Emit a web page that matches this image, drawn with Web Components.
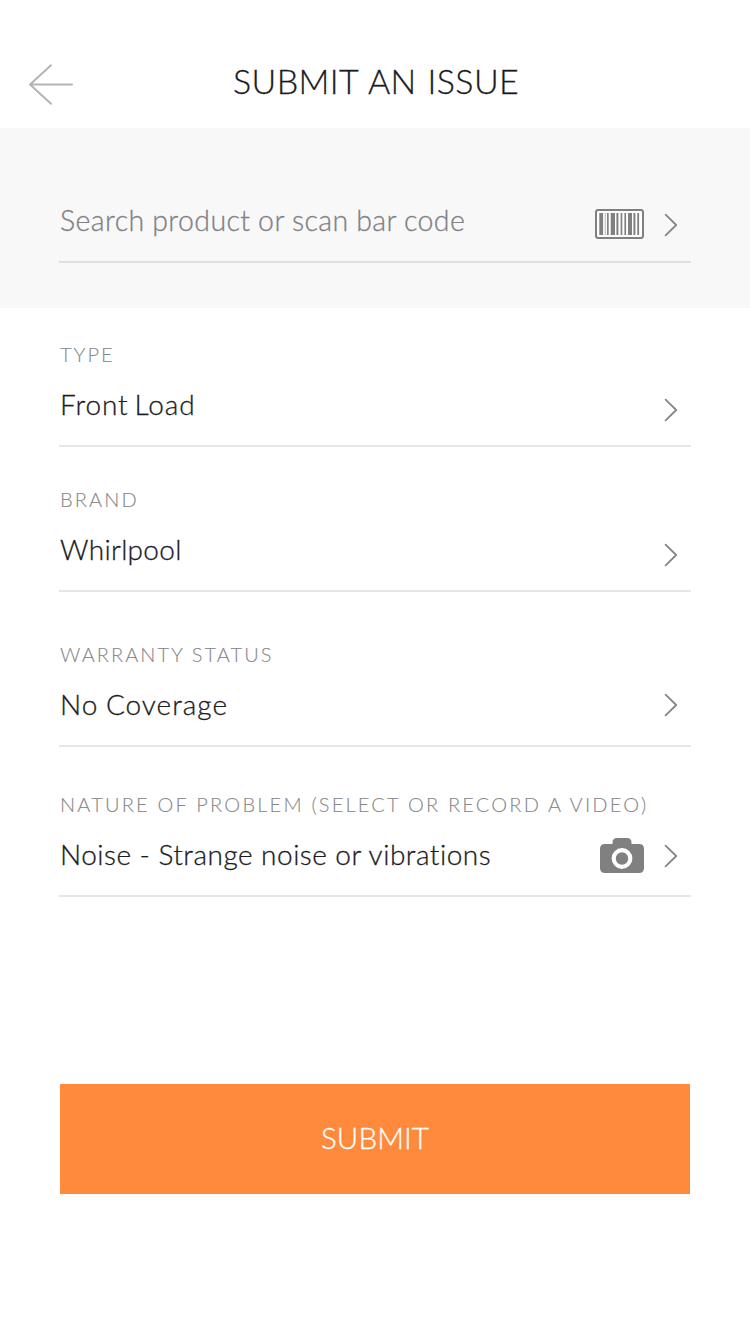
<!DOCTYPE html>
<html lang="en"><head><meta charset="utf-8"><title>Submit an issue</title>
<style>
body{margin:0;background:#fff;font-family:Lato,"Open Sans",sans-serif;font-weight:300}
</style></head><body>
<issue-screen></issue-screen>
<script>
const define = (name, html, setup) => customElements.define(name, class extends HTMLElement {
  connectedCallback(){
    if(this.shadowRoot) return;
    this.attachShadow({mode:'open'}).innerHTML = html;
    if(setup) setup(this);
  }
});
define('spaced-text', `<style>:host{display:block;white-space:nowrap;line-height:1;-webkit-text-stroke:.3px currentColor}:host([slot=label]){-webkit-text-stroke-width:.12px}</style><slot></slot>`, h=>{
  h.style.fontSize=h.getAttribute('size')+'px';
  h.style.letterSpacing=h.getAttribute('spacing')+'px';
  h.style.wordSpacing=(h.getAttribute('words')||0)+'px';
});
define('chevron-icon', `<style>:host{display:block;width:14px;height:24px}svg{display:block}</style>
<svg width="14" height="24" viewBox="0 0 14 24" fill="none" stroke="#85858a" stroke-width="1.8" stroke-linecap="round" stroke-linejoin="round"><path d="M1.6 1.7 12.2 12 1.6 22.3"/></svg>`);
define('back-icon', `<style>:host{display:block;width:46px;height:42px}svg{display:block}</style>
<svg width="46" height="42" viewBox="0 0 46 42" fill="none" stroke="#b4b4b4" stroke-width="2" stroke-linecap="round" stroke-linejoin="round"><path d="M23 1.3 2 20.5 23 39.8M2 20.5H44"/></svg>`);
define('barcode-icon', `<style>:host{display:block;width:49px;height:30px}svg{display:block}</style>
<svg width="49" height="30" viewBox="0 0 49 30"><rect x="1" y="1" width="47" height="28" rx="2.2" fill="#fff" stroke="#808080" stroke-width="2"/><g fill="#808080"><path d="M4.3 4h3.8v22H4.3zM12 4h1.7v22H12zM15.7 4h4.3v22h-4.3zM21.4 4h2v22h-2zM25.6 4h1.7v22h-1.7zM29.4 4h1.7v22h-1.7zM33 4h4v22h-4zM38.4 4h2v22h-2zM42.3 4h1.8v22h-1.8z"/><path d="M9.7 4h1v22h-1z" opacity=".6"/></g></svg>`);
define('camera-icon', `<style>:host{display:block;width:44px;height:35px;margin-bottom:1px}svg{display:block}</style>
<svg width="44" height="35" viewBox="0 0 44 35"><path fill="#808080" d="M5 6h7.5V4.5Q12.5 0 17 0h10q4.500 0 4.500 4.500V6H39q5 0 5 5v19q0 5-5 5H5q-5 0-5-5V11q0-5 5-5z"/><circle cx="22" cy="20.5" r="8.300" fill="#808080" stroke="#fff" stroke-width="4.200"/></svg>`);
define('screen-header', `<style>:host{display:grid;grid-template-columns:28px 46px 1fr;height:128px;box-sizing:border-box;color:#1b1b23}back-icon{grid-column:2;margin-top:64px}.t{margin:64px 0 0 159px}</style>
<back-icon></back-icon><div class="t"><slot></slot></div>`);
define('form-row', `<style>:host{display:flex;box-sizing:border-box;margin:0 59px;height:var(--h);border-bottom:2px solid #e6e6e6;color:#1b1b23}
.c{flex:1;min-width:0;display:flex;flex-direction:column;justify-content:flex-end;padding:0 0 27px 1px}
.l{color:#88888a;margin-bottom:26px}.i{display:flex;align-items:center;align-self:flex-end;gap:20px;height:38px;padding-right:13px;margin-bottom:var(--icon-bottom,16px)}chevron-icon{margin-top:var(--chevron-top,0px)}</style>
<div class="c"><div class="l"><slot name="label"></slot></div><div><slot></slot></div></div><div class="i"><slot name="icon"></slot><chevron-icon></chevron-icon></div>`);
define('submit-button', `<style>:host{display:block;margin:187px 60px 0}button{all:unset;box-sizing:border-box;display:flex;align-items:center;justify-content:center;width:100%;height:110px;padding-bottom:2px;background:#ff8a3c;color:#fff}</style><button><slot></slot></button>`);
define('issue-screen', `<style>:host{display:block;height:1334px;overflow:hidden}.s{background:#f8f8f8;height:180px}.s form-row{color:#808085;border-color:#e0e0e0}</style>
<screen-header><spaced-text size="34" spacing="0.4" words="1.2">SUBMIT AN ISSUE</spaced-text></screen-header>
<div class="s"><form-row style="--h:135px;--icon-bottom:18px;--chevron-top:2px"><spaced-text size="28.5" spacing="0.4" words="-0.5">Search product or scan bar code</spaced-text><barcode-icon slot="icon"></barcode-icon></form-row></div>
<form-row style="--h:139px"><spaced-text slot="label" size="20" spacing="2">TYPE</spaced-text><spaced-text size="28" spacing="0.9" words="-2.5">Front Load</spaced-text></form-row>
<form-row style="--h:145px"><spaced-text slot="label" size="20" spacing="2.1">BRAND</spaced-text><spaced-text size="28" spacing="0.3">Whirlpool</spaced-text></form-row>
<form-row style="--h:155px;--icon-bottom:21px"><spaced-text slot="label" size="20" spacing="2.05">WARRANTY STATUS</spaced-text><spaced-text size="28" spacing="1" words="-1">No Coverage</spaced-text></form-row>
<form-row style="--h:150px;--icon-bottom:20px"><spaced-text slot="label" size="20" spacing="2.21">NATURE OF PROBLEM (SELECT OR RECORD A VIDEO)</spaced-text><spaced-text size="28" spacing="0.5" words="-0.1">Noise - Strange noise or vibrations</spaced-text><camera-icon slot="icon"></camera-icon></form-row>
<submit-button><spaced-text size="29.5" spacing="0.1">SUBMIT</spaced-text></submit-button>`);
</script></body></html>
